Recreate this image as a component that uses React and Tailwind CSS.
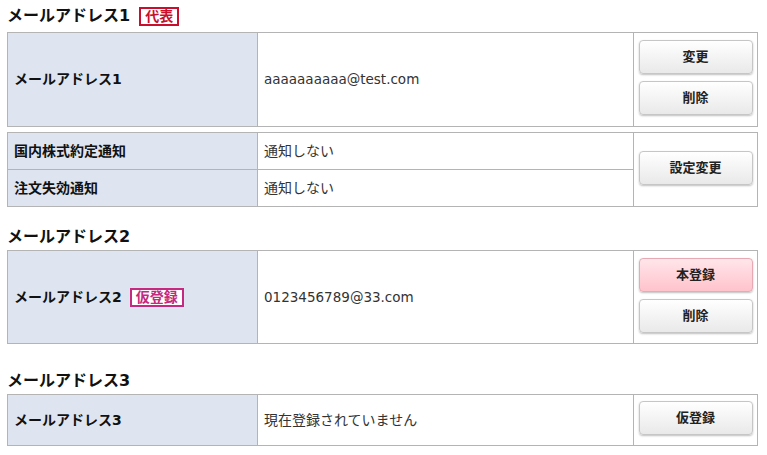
import React from "react";

const FONT = { fontFamily: '"DejaVu Sans", "Noto Sans CJK JP", sans-serif' };

function Btn({ children, primary }) {
  return (
    <button
      className={`w-[114px] h-[34px] rounded-[4px] border text-[13px] font-bold text-[#222] shadow-[0_1px_2px_rgba(0,0,0,0.25)] ${
        primary
          ? "border-[#e7a9b3] bg-gradient-to-b from-[#ffe6ea] to-[#ffc3cc]"
          : "border-[#c6c6c6] bg-gradient-to-b from-white to-[#e9e9e9]"
      }`}
    >
      {children}
    </button>
  );
}

function Badge({ children, tone }) {
  return (
    <span
      className={`inline-flex items-center h-[19px] px-[4px] border-2 text-[14px] font-semibold leading-none bg-white ${
        tone === "red" ? "border-[#c8102e] text-[#c8102e]" : "border-[#c42a7f] text-[#c42a7f]"
      }`}
    >
      {children}
    </span>
  );
}

function Heading({ children, className = "" }) {
  return (
    <div className={`flex items-center gap-[9px] h-[26px] text-[16px] font-bold text-[#111] ${className}`}>
      {children}
    </div>
  );
}

function Label({ children }) {
  return (
    <div className="flex items-center gap-[8px] pl-[6px] bg-[#dfe5f0] text-[14px] font-bold text-[#111]">
      {children}
    </div>
  );
}

function Value({ children, latin }) {
  return (
    <div
      className={`flex items-center pl-[6px] border-l border-[#b4b4b4] text-[#333] ${
        latin ? "text-[13.5px]" : "text-[14px]"
      }`}
    >
      {children}
    </div>
  );
}

function Actions({ children }) {
  return (
    <div className="flex flex-col items-center justify-center gap-[7px] pb-[4px] border-l border-[#b4b4b4]">
      {children}
    </div>
  );
}

function AddressTable({ label, value, latin, badge, buttons, height }) {
  return (
    <div className={`grid grid-cols-[249px_376px_124px] border border-[#b4b4b4] ${height}`}>
      <Label>
        {label}
        {badge}
      </Label>
      <Value latin={latin}>{value}</Value>
      <Actions>{buttons}</Actions>
    </div>
  );
}

export default function App() {
  return (
    <div className="w-[767px] h-[455px] bg-white px-[7px] overflow-hidden" style={FONT}>
      <div className="w-[751px]">
        <Heading className="h-[32px]">
          メールアドレス1
          <Badge tone="red">代表</Badge>
        </Heading>
        <AddressTable
          label="メールアドレス1"
          value="aaaaaaaaaa@test.com"
          latin
          height="h-[95px]"
          buttons={
            <>
              <Btn>変更</Btn>
              <Btn>削除</Btn>
            </>
          }
        />

        <div className="mt-[5px] grid grid-cols-[249px_376px_124px] grid-rows-[36px_37px] border border-[#b4b4b4] h-[75px]">
          <Label>国内株式約定通知</Label>
          <Value>通知しない</Value>
          <div className="row-span-2 flex items-center justify-center pb-[4px] border-l border-[#b4b4b4]">
            <Btn>設定変更</Btn>
          </div>
          <div className="flex items-center pl-[6px] bg-[#dfe5f0] border-t border-[#b4b4b4] text-[14px] font-bold text-[#111]">
            注文失効通知
          </div>
          <div className="flex items-center pl-[6px] border-l border-t border-[#b4b4b4] text-[14px] text-[#333]">
            通知しない
          </div>
        </div>

        <Heading className="mt-[17px]">メールアドレス2</Heading>
        <AddressTable
          label="メールアドレス2"
          badge={<Badge tone="pink">仮登録</Badge>}
          value="0123456789@33.com"
          latin
          height="h-[94px]"
          buttons={
            <>
              <Btn primary>本登録</Btn>
              <Btn>削除</Btn>
            </>
          }
        />

        <Heading className="mt-[24px]">メールアドレス3</Heading>
        <AddressTable
          label="メールアドレス3"
          value="現在登録されていません"
          height="h-[52px]"
          buttons={<Btn>仮登録</Btn>}
        />
      </div>
    </div>
  );
}
